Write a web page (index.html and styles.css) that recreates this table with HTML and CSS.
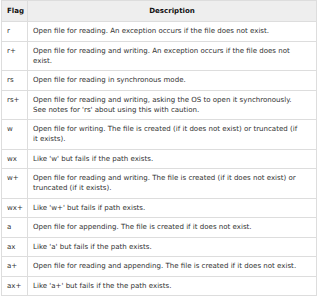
FILE: index.html
```html
<!DOCTYPE html>
<html lang="en">
<head>
    <meta charset="utf-8" />
    <meta name="viewport" content="width=device-width, initial-scale=1" />
    <title>File system flags</title>
    <link rel="stylesheet" href="styles.css">
</head>
<body>
    <table class="flags">
        <thead>
            <tr>
                <th class="flag-col">Flag</th>
                <th>Description</th>
            </tr>
        </thead>
        <tbody>
            <tr>
                <td>r</td>
                <td class="desc">Open file for reading. An exception occurs if the file does not exist.</td>
            </tr>
            <tr>
                <td>r+</td>
                <td class="desc">Open file for reading and writing. An exception occurs if the file does not<br>exist.</td>
            </tr>
            <tr>
                <td>rs</td>
                <td class="desc">Open file for reading in synchronous mode.</td>
            </tr>
            <tr>
                <td>rs+</td>
                <td class="desc">Open file for reading and writing, asking the OS to open it synchronously.<br>See notes for 'rs' about using this with caution.</td>
            </tr>
            <tr>
                <td>w</td>
                <td class="desc">Open file for writing. The file is created (if it does not exist) or truncated (if<br>it exists).</td>
            </tr>
            <tr>
                <td>wx</td>
                <td class="desc">Like 'w' but fails if the path exists.</td>
            </tr>
            <tr>
                <td>w+</td>
                <td class="desc">Open file for reading and writing. The file is created (if it does not exist) or<br>truncated (if it exists).</td>
            </tr>
            <tr>
                <td>wx+</td>
                <td class="desc">Like 'w+' but fails if path exists.</td>
            </tr>
            <tr>
                <td>a</td>
                <td class="desc">Open file for appending. The file is created if it does not exist.</td>
            </tr>
            <tr>
                <td>ax</td>
                <td class="desc">Like 'a' but fails if the path exists.</td>
            </tr>
            <tr>
                <td>a+</td>
                <td class="desc">Open file for reading and appending. The file is created if it does not exist.</td>
            </tr>
            <tr>
                <td>ax+</td>
                <td class="desc">Like 'a+' but fails if the the path exists.</td>
            </tr>
        </tbody>
    </table>
</body>
</html>
```

FILE: styles.css
```css
* {
    margin: 0;
    padding: 0;
    box-sizing: border-box;
}

body {
    font-family: 'DejaVu Sans', Verdana, sans-serif;
    font-size: 7.05px;
    color: #333;
    background: #fff;
    padding: 0 1px;
}

.flags {
    width: 316px;
    table-layout: fixed;
    border-collapse: collapse;
    border: 1px solid #ddd;
}

.flags th,
.flags td {
    border: 1px solid #ddd;
    padding: 4.25px 1px 4.25px 5px;
    line-height: 10px;
    text-align: left;
    vertical-align: top;
}

.flags td.desc {
    white-space: nowrap;
}

.flags th {
    background: #eee;
    color: #111;
    font-weight: bold;
    text-align: center;
    padding: 5px 5px;
}

.flags th.flag-col {
    width: 26px;
    text-align: left;
}
```
